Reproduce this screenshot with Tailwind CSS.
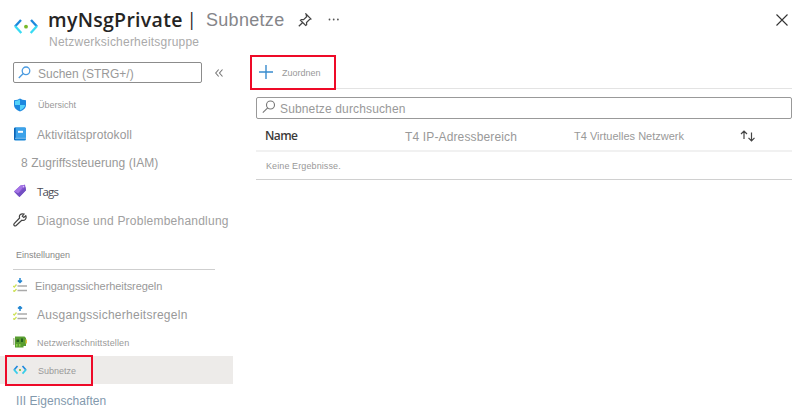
<!DOCTYPE html>
<html lang="de">
<head>
<meta charset="utf-8">
<title>myNsgPrivate | Subnetze</title>
<script src="https://cdn.jsdelivr.net/npm/@tailwindcss/browser@4"></script>
</head>
<body class="w-[801px] h-[416px] overflow-hidden bg-white font-['Liberation_Sans',Arial,sans-serif] text-[#999] whitespace-nowrap">
<header class="flex h-[52px] pl-[13px]">
  <svg class="mt-[18px] w-[26px] h-[17px] shrink-0" viewBox="0 0 26 17" fill="none" stroke-width="2.3">
    <path d="M8 2 2 8.5" stroke="#1c88dc"/><path d="m2 8 6.3 7" stroke="#38dbf3"/>
    <path d="m18 2 6 6.5" stroke="#1c88dc"/><path d="m24 8-6.3 7" stroke="#38dbf3"/>
    <circle cx="13" cy="8.7" r="1.9" fill="#78b928"/>
  </svg>
  <div class="ml-[9px] w-[158px]">
    <h1 class="mt-[6px] h-[27px] leading-[25px] text-[19.5px] font-semibold tracking-[0.3px] text-[#252423] font-['Open_Sans','Noto_Sans',sans-serif] flex items-center">myNsgPrivate<span class="ml-[4px] text-[18px] font-normal">|</span></h1>
    <p class="h-[17px] leading-[17px] mt-px text-[12px] tracking-[0.22px] text-[#aaa] pl-px">Netzwerksicherheitsgruppe</p>
  </div>
  <h2 class="mt-[8px] leading-[25px] text-[18px] tracking-[0.3px] text-[#85868a] w-[92px]">Subnetze</h2>
  <svg class="mt-[13px] w-[14px] h-[14px]" viewBox="0 0 14 14" fill="none" stroke="#444" stroke-width="1.2"><path d="m8 1 5 5-1.5.5-3 3 .2 2.3-1 .7-5.3-5.2 1-.8 2.2.2 3-3zM4.700 9.500.800 13.300"/></svg>
  <svg class="ml-[16px] mt-[18px] w-[12px] h-[3px]" viewBox="0 0 12 3" fill="#555"><circle cx="1.500" cy="1.500" r=".9"/><circle cx="5.700" cy="1.500" r=".9"/><circle cx="9.900" cy="1.500" r=".9"/></svg>
  <svg class="ml-auto mr-[13px] mt-[14px] w-[12px] h-[12px]" viewBox="0 0 12 12" stroke="#333" stroke-width="1.1"><path d="m.5.5 11 11M11.500.5l-11 11"/></svg>
</header>
<div class="flex">
  <aside class="w-[233px] shrink-0">
    <div class="flex h-[38px] pt-[10px] pl-[13px]">
      <div class="w-[189px] h-[21px] border border-[#8c8c8c] rounded-[2px] flex items-center pl-[4px]">
        <svg class="w-[13px] h-[13px]" viewBox="0 0 13 13" fill="none" stroke="#4b9be0" stroke-width="1.3"><circle cx="8" cy="4.800" r="3.800"/><path d="M5.300 7.500.800 12"/></svg>
        <span class="ml-[7px] text-[12px] text-[#999] mt-[2px]">Suchen (STRG+/)</span>
      </div>
      <svg class="ml-[13px] mt-[7px] w-[8px] h-[8px]" viewBox="0 0 8 8" fill="none" stroke="#777" stroke-width="1.1"><path d="M3.700.5.700 4l3 3.500M7.500.5l-3 3.500 3 3.500"/></svg>
    </div>
    <nav>
      <a class="flex items-center h-[29px] pl-[13px]">
        <svg class="w-[14px] h-[14px]" viewBox="0 0 14 14"><path d="M1 2.200Q5 2 7 .5 9 2 13 2.200V7q0 4-6 6.500Q1 11 1 7z" fill="#1b87df"/><path d="M2 3q3-.2 5-1.500V7H2zM7 7h5q0 3-5 5.400z" fill="#54d2fa"/></svg>
        <span class="ml-[11px] text-[9px] mt-[2px]">Übersicht</span>
      </a>
      <a class="flex items-center h-[29px] pl-[13px]">
        <svg class="w-[14px] h-[14px]" viewBox="0 0 14 14"><rect x="1" y=".5" width="12" height="13" rx="1.500" fill="#1585d8"/><path d="M2.500.5H12a1 1 0 0 1 1 1V11H2.500z" fill="#3da2e9"/><path d="M1 1.800Q1 .5 2.500.5V13Q1 13 1 12z" fill="#0c62b4"/><path d="M2 11.300h11" stroke="#9bcaf0" stroke-width=".8"/><path d="M5 4.800h5" stroke="#fff" stroke-width="2"/></svg>
        <span class="ml-[10px] text-[12px] tracking-[0.08px] mt-[2px]">Aktivitätsprotokoll</span>
      </a>
      <a class="flex items-center h-[29px] pl-[21px]"><span class="text-[12px] tracking-[0.06px]">8 Zugriffssteuerung (IAM)</span></a>
      <a class="flex items-center h-[29px] pl-[13px]">
        <svg class="w-[14px] h-[14px] -mt-[2px]" viewBox="0 0 14 14"><path d="M1 7.500 7.500 1.500 12 .8l1 5.500L6.500 13z" fill="#8454d0"/><path d="M1 7.500 7.500 1.500 12 .8 5 9.500z" fill="#a474e5"/><path d="m1 7.500 4 4.300 1.500 1.200L13 6.300 12.500 3 5.500 9.500z" fill="#7350c2"/><circle cx="10.600" cy="2.800" r=".8" fill="#e1cef8"/></svg>
        <span class="ml-[10px] text-[11.5px] tracking-[-0.8px] font-medium text-[#4b4b55] font-['Open_Sans','Noto_Sans',sans-serif]">Tags</span>
      </a>
      <a class="flex items-center h-[29px] pl-[13px]">
        <svg class="w-[14px] h-[14px] shrink-0 -mt-[2px]" viewBox="0 0 14 14" fill="none" stroke="#444" stroke-width="1.200"><path d="M12.800 2.700 10.800 4.500 9.300 3.100 11 1.100Q8.500.2 7 1.900 6 3.200 6.600 5L1.200 10.600q-.8 1 0 1.900t2 0L8.800 7.200q2 .7 3.500-.8 1.400-1.600.5-3.700z"/></svg>
        <span class="ml-[10px] text-[12px] tracking-[0.23px] text-[#a0a0a0] mt-px">Diagnose und Problembehandlung</span>
      </a>
      <div class="ml-[13px] mr-[18px] mt-[3px] h-[32px] border-b border-[#cfcfcf] flex items-center pl-[3px] pt-[4px] mb-[2px]"><span class="text-[9px] text-[#888]">Einstellungen</span></div>
      <a class="flex items-center h-[28px] pl-[13px]">
        <svg class="w-[14px] h-[14px] -mt-[3px]" viewBox="0 0 14 14" fill="none"><path d="M7 0v4M5 2.500l2 2 2-2" stroke="#2386d1" stroke-width="1.500"/><path d="M4.500 8H14M4.500 12.500H14" stroke="#aaa" stroke-width="1.500"/><path d="m0 8 1.300 1L3.500 6.500M0 12.500l1.300 1L3.500 11" stroke="#cfe25c" stroke-width="1.300"/></svg>
        <span class="ml-[8px] text-[11px] tracking-[-0.07px]">Eingangssicherheitsregeln</span>
      </a>
      <a class="flex items-center h-[28px] pl-[13px]">
        <svg class="w-[14px] h-[14px] -mt-[2px]" viewBox="0 0 14 14" fill="none"><path d="M7 5V1M5 2.500l2-2 2 2" stroke="#2386d1" stroke-width="1.500"/><path d="M4.500 8H14M4.500 12.500H14" stroke="#aaa" stroke-width="1.500"/><path d="m0 8 1.300 1L3.500 6.500M0 12.500l1.300 1L3.500 11" stroke="#cfe25c" stroke-width="1.300"/></svg>
        <span class="ml-[10px] text-[12px] tracking-[0.26px] mt-[2px]">Ausgangssicherheitsregeln</span>
      </a>
      <a class="flex items-center h-[28px] pl-[13px]">
        <svg class="w-[14px] h-[12px]" viewBox="0 0 14 12"><path d="M0 2h1.500v7H0z" fill="#b8c2a4"/><path d="M2 .5h9.500l1.500 1.500V10h-2.500v1.500H2z" fill="#599d30"/><path d="M3.500 3.500H6V6H3.500zM8 2.500h2V6H8z" fill="#245e20"/><path d="M3 8h1.500v2.500H3zM6 8h1.500v2.500H6z" fill="#8bcf48"/><path d="M12.500 3.500H14v4h-1.500z" fill="#dfc13d"/></svg>
        <span class="ml-[10px] text-[9px] tracking-[0.13px] mt-[3px]">Netzwerkschnittstellen</span>
      </a>
      <a class="relative flex items-center h-[28px] pl-[13px] bg-[#edebe9]">
        <svg class="w-[14px] h-[10px]" viewBox="0 0 14 10" fill="none" stroke-width="1.700"><path d="M4.500 1 1 5" stroke="#1c88dc"/><path d="m1 4.600 3.500 4" stroke="#38cdea"/><path d="m9.500 1 3.500 4" stroke="#1c88dc"/><path d="M13 4.600 9.500 8.600" stroke="#38cdea"/><circle cx="7" cy="5" r="1.100" fill="#78b928"/></svg>
        <span class="ml-[11px] text-[9px] mt-[4px]">Subnetze</span>
        <span class="absolute left-[5px] top-[-1px] w-[88px] h-[31px] border-2 border-[#ee0a28]"></span>
      </a>
      <a class="flex items-center h-[32px] pl-[16px] pt-[2px]"><span class="text-[12px] tracking-[0.05px] text-[#8299ad]">III Eigenschaften</span></a>
    </nav>
  </aside>
  <main class="w-[536px] ml-[23px]">
    <div class="relative h-[37px] border-b border-[#e3e3e3] flex items-center pt-[4px]">
      <svg class="ml-[3px] w-[14px] h-[14px]" viewBox="0 0 14 14" stroke="#398cce" stroke-width="1.400"><path d="M7 0v14M0 7h14"/></svg>
      <span class="ml-[9px] text-[9px] mt-[3px]">Zuordnen</span>
      <span class="absolute left-[-6px] top-[3px] w-[86px] h-[35px] border-2 border-[#ee0a28]"></span>
    </div>
    <div class="mt-[8px] w-[536px] h-[22px] border border-[#999] rounded-[2px] flex items-center pl-[5px]">
      <svg class="w-[14px] h-[14px] -mt-[2px]" viewBox="0 0 14 14" fill="none" stroke="#777" stroke-width="1.100"><circle cx="8.500" cy="5" r="4"/><path d="M5.700 7.800.800 12.700"/></svg>
      <span class="ml-[4px] text-[12px] tracking-[0.14px] mt-px">Subnetze durchsuchen</span>
    </div>
    <div class="h-[33px] border-b-2 border-[#f1f1f1] flex items-center pl-[9px] pt-[3px]">
      <span class="w-[140px] text-[12px] font-semibold tracking-[-0.6px] text-[#3b3a39] font-['Open_Sans','Noto_Sans',sans-serif]">Name</span>
      <span class="w-[169px] text-[12px] tracking-[0.14px] mt-px">T4 IP-Adressbereich</span>
      <span class="w-[166px] text-[11px] tracking-[0.01px] mt-px">T4 Virtuelles Netzwerk</span>
      <svg class="w-[16px] h-[12px]" viewBox="0 0 16 12" fill="none" stroke="#444" stroke-width="1.200"><path d="M4 9V1M1 4l3-3 3 3M11.500 2.500v8M8.500 7.800l3 3 3-3"/></svg>
    </div>
    <div class="h-[28px] border-b border-[#d0d0d0] flex items-center pl-[10px] pt-[3px]"><span class="text-[9px] tracking-[0.1px]">Keine Ergebnisse.</span></div>
  </main>
</div>
</body>
</html>
